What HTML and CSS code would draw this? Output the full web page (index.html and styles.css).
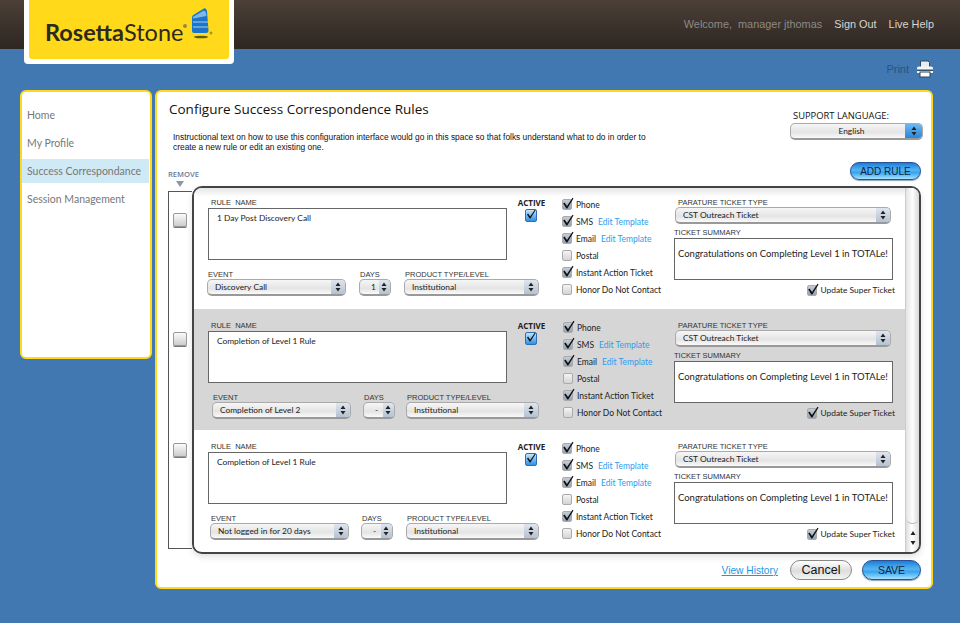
FILE: index.html
```html
<!DOCTYPE html>
<html lang="en">
<head>
  <meta charset="UTF-8">
  <meta name="viewport" content="width=device-width, initial-scale=1.0">
  <title>Configure Success Correspondence Rules</title>
  <link rel="stylesheet" href="styles.css">
</head>
<body>
  <svg class="defs" width="0" height="0">
    <symbol id="tick" viewBox="0 0 12 12">
      <path d="M2.5 5.5 L5 9 L10.5 0.8 L11.5 1.6 L5.3 11.4 L4.4 11.4 L1.2 6.6 Z" fill="#111"/>
    </symbol>
    <symbol id="arrows" viewBox="0 0 6 10">
      <path d="M3 0.5 L5.5 4 H0.5 Z M3 9.5 L0.5 6 H5.5 Z" fill="#222"/>
    </symbol>
  </svg>

  <header class="topbar">
    <div class="logo">
      <div class="logo-inner">
        <span class="logo-text"><b>Rosetta</b>Stone</span>
        <svg class="logo-mark" width="32" height="36" viewBox="0 0 32 36">
          <circle cx="3" cy="20" r="2" fill="#9a8a3a"/>
          <path d="M10 12 Q10 9 13 8 L21 3 Q24 1 25 5 L26.5 25 Q26.5 27 24 27 H12 Q10 27 10 25 Z" fill="#1b75c8"/>
          <path d="M11 11 L21 5 Q23 4 24 7 L24.5 10 L11 12.5 Z" fill="#7db8e8"/>
          <path d="M11 16 H26 M11 21 H26" stroke="#a9d2f2" stroke-width="1.2"/>
          <ellipse cx="19" cy="31" rx="7" ry="1.3" fill="#5f5a10"/>
          <circle cx="29" cy="27" r="1.5" fill="#a49438"/>
        </svg>
      </div>
    </div>
    <nav class="topnav">
      <span class="welcome">Welcome,&nbsp; manager jthomas</span>
      <a href="#">Sign Out</a>
      <a href="#">Live Help</a>
    </nav>
  </header>

  <div class="printbar">
    <span>Print</span>
    <svg width="18" height="18" viewBox="0 0 18 18">
      <path d="M4.5 1 H12 L13.5 2.5 V8 H4.5 Z" fill="#e8edf2" stroke="#33465c" stroke-width="1"/>
      <path d="M1 8 Q1 6.5 3 6.5 H15 Q17 6.5 17 8 V13 H1 Z" fill="#f2f4f6"/>
      <rect x="1" y="9.5" width="16" height="1.5" fill="#39506a"/>
      <rect x="4" y="12" width="10" height="5" fill="#fff" stroke="#33465c" stroke-width="1"/>
    </svg>
  </div>

  <main class="layout">
    <aside class="sidebar">
      <a href="#">Home</a>
      <a href="#">My Profile</a>
      <a href="#" class="current">Success Correspondance</a>
      <a href="#">Session Management</a>
    </aside>

    <section class="panel">
      <div class="panel-head">
        <div class="intro">
          <h1>Configure Success Correspondence Rules</h1>
          <p>Instructional text on how to use this configuration interface would go in this space so that folks understand what to do in order to create a new rule or edit an existing one.</p>
        </div>
        <div class="language">
          <label>SUPPORT LANGUAGE:</label>
          <div class="select select-lang"><span>English</span><i class="stepper"><svg width="6" height="10"><use href="#arrows"/></svg></i></div>
        </div>
      </div>

      <div class="toolbar">
        <span class="remove-label">REMOVE</span>
        <button class="glossy add-rule">ADD RULE</button>
      </div>

      <div class="rules-wrap">
        <div class="remove-col">
          <span class="remove-box r1"></span>
          <span class="remove-box r2"></span>
          <span class="remove-box r3"></span>
        </div>

        <div class="rules">
          <div class="rule-list">

            <div class="rule rule-1">
              <div class="rule-main">
                <label>RULE &nbsp;NAME</label>
                <div class="textbox name-box">1 Day Post Discovery Call</div>
                <div class="rule-selects">
                  <div class="field event"><label>EVENT</label><div class="select"><span>Discovery Call</span><i class="stepper"><svg width="6" height="10"><use href="#arrows"/></svg></i></div></div>
                  <div class="field days"><label>DAYS</label><div class="select"><span>1</span><i class="stepper"><svg width="6" height="10"><use href="#arrows"/></svg></i></div></div>
                  <div class="field product"><label>PRODUCT TYPE/LEVEL</label><div class="select"><span>Institutional</span><i class="stepper"><svg width="6" height="10"><use href="#arrows"/></svg></i></div></div>
                </div>
              </div>
              <div class="active-col">
                <strong>ACTIVE</strong>
                <span class="active-check"><svg width="12" height="12"><use href="#tick"/></svg></span>
              </div>
              <ul class="channels">
                <li><span class="check on"><svg width="12" height="12"><use href="#tick"/></svg></span>Phone</li>
                <li><span class="check on"><svg width="12" height="12"><use href="#tick"/></svg></span>SMS <a href="#">Edit Template</a></li>
                <li><span class="check on"><svg width="12" height="12"><use href="#tick"/></svg></span>Email <a href="#">Edit Template</a></li>
                <li><span class="check"></span>Postal</li>
                <li><span class="check on"><svg width="12" height="12"><use href="#tick"/></svg></span>Instant Action Ticket</li>
                <li><span class="check"></span>Honor Do Not Contact</li>
              </ul>
              <div class="ticket">
                <label class="ticket-type">PARATURE TICKET TYPE</label>
                <div class="select"><span>CST Outreach Ticket</span><i class="stepper"><svg width="6" height="10"><use href="#arrows"/></svg></i></div>
                <label class="ticket-summary">TICKET SUMMARY</label>
                <div class="textbox summary-box">Congratulations on Completing Level 1 in TOTALe!</div>
                <div class="update"><span class="check on"><svg width="12" height="12"><use href="#tick"/></svg></span>Update Super Ticket</div>
              </div>
            </div>

            <div class="rule rule-2">
              <div class="rule-main">
                <label>RULE &nbsp;NAME</label>
                <div class="textbox name-box">Completion of Level 1 Rule</div>
                <div class="rule-selects">
                  <div class="field event"><label>EVENT</label><div class="select"><span>Completion of Level 2</span><i class="stepper"><svg width="6" height="10"><use href="#arrows"/></svg></i></div></div>
                  <div class="field days"><label>DAYS</label><div class="select"><span>-</span><i class="stepper"><svg width="6" height="10"><use href="#arrows"/></svg></i></div></div>
                  <div class="field product"><label>PRODUCT TYPE/LEVEL</label><div class="select"><span>Institutional</span><i class="stepper"><svg width="6" height="10"><use href="#arrows"/></svg></i></div></div>
                </div>
              </div>
              <div class="active-col">
                <strong>ACTIVE</strong>
                <span class="active-check"><svg width="12" height="12"><use href="#tick"/></svg></span>
              </div>
              <ul class="channels">
                <li><span class="check on"><svg width="12" height="12"><use href="#tick"/></svg></span>Phone</li>
                <li><span class="check on"><svg width="12" height="12"><use href="#tick"/></svg></span>SMS <a href="#">Edit Template</a></li>
                <li><span class="check on"><svg width="12" height="12"><use href="#tick"/></svg></span>Email <a href="#">Edit Template</a></li>
                <li><span class="check"></span>Postal</li>
                <li><span class="check on"><svg width="12" height="12"><use href="#tick"/></svg></span>Instant Action Ticket</li>
                <li><span class="check"></span>Honor Do Not Contact</li>
              </ul>
              <div class="ticket">
                <label class="ticket-type">PARATURE TICKET TYPE</label>
                <div class="select"><span>CST Outreach Ticket</span><i class="stepper"><svg width="6" height="10"><use href="#arrows"/></svg></i></div>
                <label class="ticket-summary">TICKET SUMMARY</label>
                <div class="textbox summary-box">Congratulations on Completing Level 1 in TOTALe!</div>
                <div class="update"><span class="check on"><svg width="12" height="12"><use href="#tick"/></svg></span>Update Super Ticket</div>
              </div>
            </div>

            <div class="rule rule-3">
              <div class="rule-main">
                <label>RULE &nbsp;NAME</label>
                <div class="textbox name-box">Completion of Level 1 Rule</div>
                <div class="rule-selects">
                  <div class="field event"><label>EVENT</label><div class="select"><span>Not logged in for 20 days</span><i class="stepper"><svg width="6" height="10"><use href="#arrows"/></svg></i></div></div>
                  <div class="field days"><label>DAYS</label><div class="select"><span>-</span><i class="stepper"><svg width="6" height="10"><use href="#arrows"/></svg></i></div></div>
                  <div class="field product"><label>PRODUCT TYPE/LEVEL</label><div class="select"><span>Institutional</span><i class="stepper"><svg width="6" height="10"><use href="#arrows"/></svg></i></div></div>
                </div>
              </div>
              <div class="active-col">
                <strong>ACTIVE</strong>
                <span class="active-check"><svg width="12" height="12"><use href="#tick"/></svg></span>
              </div>
              <ul class="channels">
                <li><span class="check on"><svg width="12" height="12"><use href="#tick"/></svg></span>Phone</li>
                <li><span class="check on"><svg width="12" height="12"><use href="#tick"/></svg></span>SMS <a href="#">Edit Template</a></li>
                <li><span class="check on"><svg width="12" height="12"><use href="#tick"/></svg></span>Email <a href="#">Edit Template</a></li>
                <li><span class="check"></span>Postal</li>
                <li><span class="check on"><svg width="12" height="12"><use href="#tick"/></svg></span>Instant Action Ticket</li>
                <li><span class="check"></span>Honor Do Not Contact</li>
              </ul>
              <div class="ticket">
                <label class="ticket-type">PARATURE TICKET TYPE</label>
                <div class="select"><span>CST Outreach Ticket</span><i class="stepper"><svg width="6" height="10"><use href="#arrows"/></svg></i></div>
                <label class="ticket-summary">TICKET SUMMARY</label>
                <div class="textbox summary-box">Congratulations on Completing Level 1 in TOTALe!</div>
                <div class="update"><span class="check on"><svg width="12" height="12"><use href="#tick"/></svg></span>Update Super Ticket</div>
              </div>
            </div>

          </div>

          <div class="scrollbar">
            <div class="scroll-thumb"></div>
            <div class="scroll-arrows">
              <svg width="6" height="22" viewBox="0 0 6 22"><path d="M3 5 L5.5 9 H0.5 Z M3 19 L0.5 15 H5.5 Z" fill="#222"/></svg>
            </div>
          </div>
        </div>
      </div>

      <div class="panel-foot">
        <a href="#" class="history">View History</a>
        <button class="cancel">Cancel</button>
        <button class="glossy save">SAVE</button>
      </div>
    </section>
  </main>
</body>
</html>
```

FILE: styles.css
```css
* {
  box-sizing: border-box;
}
html, body {
  height: 623px;
}
body {
  margin: 0;
  background-color: #4178b1;
  font-family: "Open Sans", Arial, sans-serif;
  color: #222;
  overflow: hidden;
}
.defs {
  display: block;
  height: 0;
}
a {
  text-decoration: none;
}

/* top bar */
.topbar {
  height: 49px;
  background: linear-gradient(#4c4038, #2e2620);
  display: flex;
  justify-content: flex-end;
  align-items: center;
  padding: 0 26px 1px 0;
  position: relative;
}
.logo {
  position: absolute;
  left: 24px;
  top: 0;
  width: 210px;
  height: 64px;
  background-color: #fff;
  border-radius: 0 0 4px 4px;
  padding: 0 5px 5px;
}
.logo-inner {
  height: 59px;
  background-color: #ffd91a;
  border-radius: 0 0 3px 3px;
  display: flex;
  align-items: flex-start;
  padding-left: 16px;
}
.logo-text {
  font-family: "Lato", Arial, sans-serif;
  font-size: 23.5px;
  line-height: 26px;
  margin-top: 19px;
  color: #2d2a20;
}
.logo-text b {
  font-weight: 700;
}
.logo-mark {
  margin: 6px 0 0 -1px;
}
.topnav {
  display: flex;
  gap: 12px;
  font-family: "Liberation Sans", Arial, sans-serif;
  font-size: 10.9px;
}
.topnav a {
  color: #d8d4d0;
}
.welcome {
  color: #8d8985;
}

/* print link */
.printbar {
  height: 41px;
  display: flex;
  justify-content: flex-end;
  align-items: center;
  gap: 7px;
  padding: 0 26px 2px 0;
  font-family: "Liberation Sans", Arial, sans-serif;
  font-size: 11px;
  color: #2a5482;
}

/* page columns */
.layout {
  display: flex;
  align-items: flex-start;
  gap: 3px;
  padding-left: 20px;
}
.sidebar {
  width: 132px;
  height: 269px;
  background-color: #fff;
  border: 2px solid #ffd91a;
  border-radius: 6px;
  padding-top: 11px;
  display: flex;
  flex-direction: column;
  gap: 4px;
}
.sidebar a {
  height: 24px;
  line-height: 24px;
  padding-left: 5px;
  margin-right: 1px;
  font-family: "Lato", Arial, sans-serif;
  font-size: 10.5px;
  white-space: nowrap;
  color: #777;
}
.sidebar .current {
  background-color: #cfe9f5;
}
.panel {
  width: 778px;
  height: 499px;
  background-color: #fff;
  border: 2px solid #ffd91a;
  border-radius: 6px;
  padding: 0 10px 0 11px;
}
.panel-head {
  height: 70px;
  display: flex;
  justify-content: space-between;
}
.intro h1 {
  margin: 8px 0 0 1px;
  font-size: 13.5px;
  line-height: 19px;
  font-weight: 400;
  color: #111;
}
.intro p {
  margin: 13px 0 0 5px;
  width: 480px;
  font-family: "Liberation Sans", Arial, sans-serif;
  font-size: 8.4px;
  line-height: 10px;
  color: #111;
}
.language {
  width: 133px;
  padding-top: 17px;
  margin-right: -2px;
}
.language label {
  display: block;
  padding-left: 3px;
  font-size: 9.4px;
  line-height: 14px;
  color: #111;
}
.select-lang {
  justify-content: center;
  font-family: "Lato", Arial, sans-serif;
  font-size: 9.5px;
}
.select-lang span {
  flex: 1;
  text-align: center;
}
.select-lang .stepper {
  background: linear-gradient(#6bb8f2, #2a86d8);
  width: 17px;
}

/* remove header and add rule */
.toolbar {
  height: 24px;
  display: flex;
  justify-content: space-between;
  align-items: flex-start;
}
.remove-label {
  margin-top: 7px;
  font-size: 7.6px;
  font-weight: 600;
  line-height: 10px;
  color: #6c7a94;
  position: relative;
}
.remove-label::after {
  content: "";
  position: absolute;
  left: 8px;
  top: 12px;
  border: 4px solid transparent;
  border-top: 6px solid #8d96a8;
  border-bottom: 0;
}
.glossy {
  border: 1px solid #2b4f98;
  border-radius: 10px;
  color: #10233f;
  font-family: "Liberation Sans", Arial, sans-serif;
  font-size: 10px;
  padding: 0;
  background: linear-gradient(#1a7fd6 0, #58b4f2 45%, #35a4ee 60%, #a6e2ff 100%);
  box-shadow: 0 1px 1px #8aa0b5;
}
.add-rule {
  width: 71px;
  height: 18px;
}

/* rules frame */
.rules-wrap {
  display: flex;
  align-items: flex-start;
  height: 368px;
}
.remove-col {
  width: 24px;
  height: 358px;
  margin-top: 5px;
  border: 1px solid #555;
  border-right: 0;
  position: relative;
}
.remove-box {
  position: absolute;
  left: 4px;
  width: 14px;
  height: 14px;
  border: 1px solid #999;
  border-radius: 2px;
  background: linear-gradient(#fbfbfb, #ccc);
  box-shadow: 0 1px 0 #777;
}
.r1 { top: 21px; }
.r2 { top: 140px; }
.r3 { top: 251px; }
.rules {
  width: 730px;
  height: 368px;
  border: 2px solid #444;
  border-radius: 10px;
  display: flex;
  overflow: hidden;
  background-color: #fff;
  box-shadow: 0 3px 6px rgba(0, 0, 0, 0.12);
}
.rule-list {
  flex: 1;
  min-width: 0;
}
.scrollbar {
  width: 14px;
  background: linear-gradient(to right, #ddd, #fff 45%, #ddd);
  border-left: 1px solid #ccc;
  display: flex;
  flex-direction: column;
}
.scroll-thumb {
  height: 336px;
  border-radius: 6px;
  background: linear-gradient(to right, #e4e4e4, #fdfdfd 50%, #d8d8d8);
  border-bottom: 1px solid #bbb;
}
.scroll-arrows {
  flex: 1;
  display: flex;
  justify-content: center;
  padding-top: 2px;
}

.rule {
  display: flex;
  height: 121px;
  background-color: #fff;
  padding-left: 14px;
  font-family: "Lato", Arial, sans-serif;
  font-size: 8.4px;
}
.rule-1 {
  padding-top: 10px;
  background: linear-gradient(#e6e6e6, #fff 9px);
}
.rule-2 {
  background-color: #d6d6d6;
  padding-top: 12px;
}
.rule-3 {
  padding-top: 12px;
}
label {
  display: block;
}
.rule label {
  font-family: "Liberation Sans", Arial, sans-serif;
  font-size: 7.5px;
  line-height: 9px;
  color: #333;
}
.textbox {
  background-color: #fff;
  border: 1px solid #666;
  color: #222;
}
.rule-main {
  width: 299px;
  flex: none;
}
.rule-main > label {
  padding-left: 3px;
}
.name-box {
  height: 52px;
  margin-top: 1px;
  padding: 3px 8px;
  line-height: 12px;
}
.rule-selects {
  display: flex;
  margin-top: 12px;
}
.field {
  flex: none;
}
.field label {
  padding-left: 1px;
  height: 5px;
  line-height: 6px;
  margin-bottom: 2px;
  white-space: nowrap;
}
.event {
  width: 139px;
  margin-right: 13px;
  margin-left: -1px;
}
.days {
  width: 32px;
  margin-right: 13px;
}
.product {
  width: 135px;
}
.rule-2 .event {
  margin-left: 4px;
  margin-right: 12px;
}
.rule-2 .days {
  margin-right: 11px;
}
.rule-2 .product {
  width: 133px;
}
.rule-3 .event {
  margin-left: 2px;
  margin-right: 12px;
}
.rule-3 .days {
  margin-right: 13px;
}
.rule-3 .product {
  width: 133px;
}

/* mac style select */
.select {
  display: flex;
  align-items: center;
  height: 17px;
  border: 1px solid #aaa;
  border-bottom: 2px solid #999;
  border-radius: 5px;
  overflow: hidden;
  background: linear-gradient(#f6f6f6, #e4e4e4 60%, #fafafa);
  font-size: 8.4px;
  color: #222;
  justify-content: space-between;
  padding-left: 7px;
}
.stepper {
  width: 14px;
  height: 100%;
  background: linear-gradient(#dfe5ee, #b5c2d3);
  display: flex;
  align-items: center;
  justify-content: center;
  flex: none;
}
.days .select {
  padding-left: 11px;
}
.days .stepper {
  width: 11px;
}

.active-col {
  width: 49px;
  margin-right: 6px;
  flex: none;
  display: flex;
  flex-direction: column;
  align-items: center;
  font-family: "Open Sans", Arial, sans-serif;
}
.active-col strong {
  font-size: 8px;
  line-height: 10px;
}
.active-check {
  width: 12px;
  height: 13px;
  margin-top: 1px;
  border-radius: 2px;
  border: 1px solid #2c6fb8;
  background: linear-gradient(#c6e4fb, #2c92e6);
  display: flex;
  align-items: flex-end;
  justify-content: center;
  padding-bottom: 1px;
}
.channels {
  list-style: none;
  margin: -2px 0 0;
  padding: 0;
  width: 112px;
  flex: none;
}
.channels li {
  height: 17px;
  display: flex;
  align-items: center;
  white-space: nowrap;
  font-size: 8.5px;
}
.channels a {
  color: #2b9df0;
  margin-left: 5px;
}
.rule-2 .channels {
  padding-left: 1px;
}
.check {
  width: 10px;
  height: 11px;
  margin-right: 4px;
  border: 1px solid #aaa;
  border-radius: 2px;
  background: linear-gradient(#f4f4f4, #d4d4d4);
  flex: none;
  position: relative;
}
.check.on {
  background: linear-gradient(#c4ccd6, #95a3b4);
}
.check svg {
  position: absolute;
  left: -1px;
  top: -3px;
}
.ticket {
  width: 219px;
  flex: none;
}
.ticket .select {
  margin-left: 1px;
  width: 216px;
}
.ticket-type {
  padding-left: 4px;
}
.ticket-summary {
  margin-top: 4px;
}
.summary-box {
  height: 42px;
  margin-top: 1px;
  padding: 9px 3px;
  font-size: 9.5px;
  line-height: 12px;
  white-space: nowrap;
}
.update {
  display: flex;
  align-items: center;
  justify-content: flex-end;
  height: 14px;
  margin-top: 3px;
  margin-right: -2px;
  white-space: nowrap;
}

/* footer */
.panel-foot {
  display: flex;
  justify-content: flex-end;
  align-items: center;
  height: 20px;
  margin-top: 6px;
}
.history {
  color: #1f95e4;
  text-decoration: underline;
  font-family: "Liberation Sans", Arial, sans-serif;
  font-size: 10.2px;
  margin-right: 12px;
}
.cancel {
  width: 62px;
  height: 20px;
  margin-right: 10px;
  border: 1px solid #888;
  border-radius: 10px;
  background: linear-gradient(#fff, #ddd 55%, #f4f4f4);
  font-family: "Liberation Sans", Arial, sans-serif;
  font-size: 12.5px;
  color: #111;
  padding: 0;
}
.save {
  width: 59px;
  height: 20px;
  font-size: 10.5px;
}
```
